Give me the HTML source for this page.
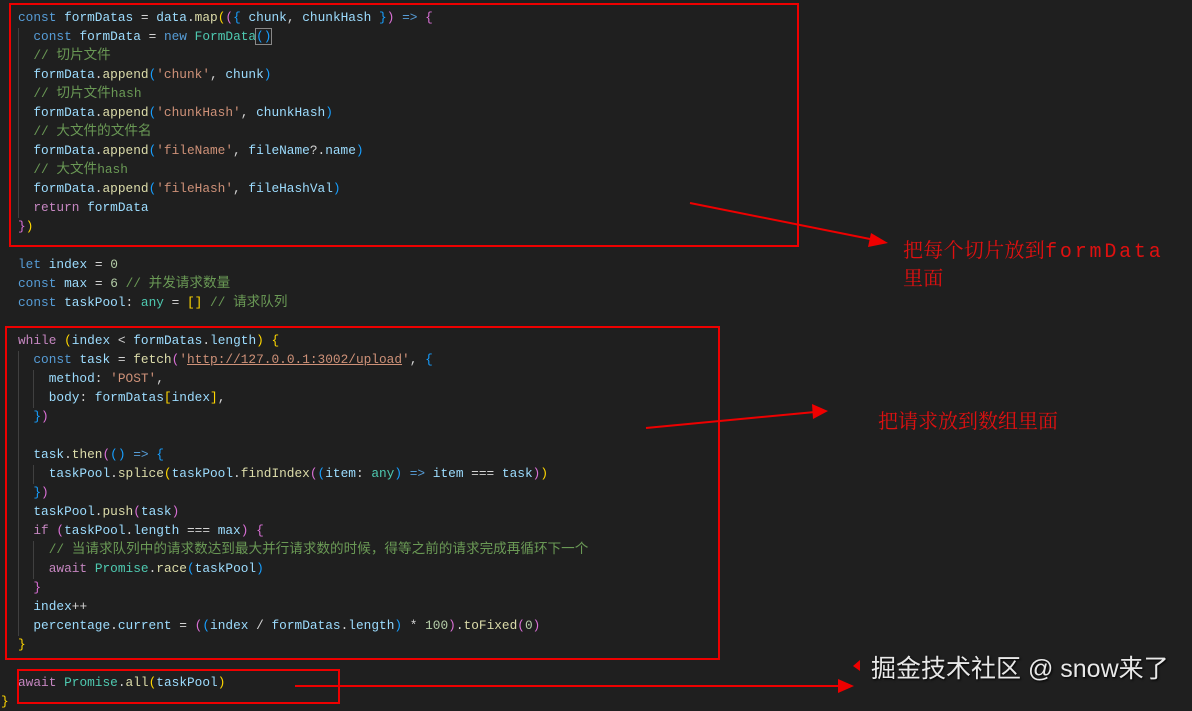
<!DOCTYPE html>
<html><head><meta charset="utf-8"><style>
body{margin:0;width:1192px;height:706px;background:#1f1f1f;overflow:hidden;position:relative;font-family:"Liberation Mono","Noto Sans CJK SC",monospace;}
.code{position:absolute;left:18px;top:8px;font-size:12.8px;line-height:19px;color:#d4d4d4;white-space:pre;}
.k{color:#569cd6}.v{color:#9cdcfe}.f{color:#dcdcaa}.s{color:#ce9178}.c{color:#6a9955}.p{color:#c586c0}.t{color:#4ec9b0}.n{color:#b5cea8}
.z{font-size:13.6px;line-height:19px;display:inline-block;height:19px;vertical-align:top;position:relative;top:1px}
.y{color:#ffd700}.m{color:#da70d6}.b{color:#179fff}
.g{position:absolute;width:1px;background:#404040}
.box{position:absolute;border:2px solid #e00;}
.ann{position:absolute;color:#e01010;font-family:"Liberation Mono","Noto Serif CJK SC",serif;font-size:20px;line-height:28px;}
</style></head><body>
<div class="g" style="left:18px;top:28px;height:190px"></div>
<div class="g" style="left:18px;top:351px;height:285px"></div>
<div class="g" style="left:33px;top:370px;height:38px"></div>
<div class="g" style="left:33px;top:465px;height:19px"></div>
<div class="g" style="left:33px;top:541px;height:38px"></div>
<div class="code"><span class="k">const</span> <span class="v">formDatas</span> = <span class="v">data</span>.<span class="f">map</span><span class="y">(</span><span class="m">(</span><span class="b">{</span> <span class="v">chunk</span>, <span class="v">chunkHash</span> <span class="b">}</span><span class="m">)</span> <span class="k">=&gt;</span> <span class="m">{</span>
  <span class="k">const</span> <span class="v">formData</span> = <span class="k">new</span> <span class="t">FormData</span><span class="b" style="outline:1px solid #888">()</span>
  <span class="c">// <span class="z">切片文件</span></span>
  <span class="v">formData</span>.<span class="f">append</span><span class="b">(</span><span class="s">'chunk'</span>, <span class="v">chunk</span><span class="b">)</span>
  <span class="c">// <span class="z">切片文件</span>hash</span>
  <span class="v">formData</span>.<span class="f">append</span><span class="b">(</span><span class="s">'chunkHash'</span>, <span class="v">chunkHash</span><span class="b">)</span>
  <span class="c">// <span class="z">大文件的文件名</span></span>
  <span class="v">formData</span>.<span class="f">append</span><span class="b">(</span><span class="s">'fileName'</span>, <span class="v">fileName</span>?.<span class="v">name</span><span class="b">)</span>
  <span class="c">// <span class="z">大文件</span>hash</span>
  <span class="v">formData</span>.<span class="f">append</span><span class="b">(</span><span class="s">'fileHash'</span>, <span class="v">fileHashVal</span><span class="b">)</span>
  <span class="p">return</span> <span class="v">formData</span>
<span class="m">}</span><span class="y">)</span>

<span class="k">let</span> <span class="v">index</span> = <span class="n">0</span>
<span class="k">const</span> <span class="v">max</span> = <span class="n">6</span> <span class="c">// <span class="z">并发请求数量</span></span>
<span class="k">const</span> <span class="v">taskPool</span>: <span class="t">any</span> = <span class="y">[]</span> <span class="c">// <span class="z">请求队列</span></span>

<span class="p">while</span> <span class="y">(</span><span class="v">index</span> &lt; <span class="v">formDatas</span>.<span class="v">length</span><span class="y">)</span> <span class="y">{</span>
  <span class="k">const</span> <span class="v">task</span> = <span class="f">fetch</span><span class="m">(</span><span class="s">'<u>http://127.0.0.1:3002/upload</u>'</span>, <span class="b">{</span>
    <span class="v">method</span>: <span class="s">'POST'</span>,
    <span class="v">body</span>: <span class="v">formDatas</span><span class="y">[</span><span class="v">index</span><span class="y">]</span>,
  <span class="b">}</span><span class="m">)</span>

  <span class="v">task</span>.<span class="f">then</span><span class="m">(</span><span class="b">()</span> <span class="k">=&gt;</span> <span class="b">{</span>
    <span class="v">taskPool</span>.<span class="f">splice</span><span class="y">(</span><span class="v">taskPool</span>.<span class="f">findIndex</span><span class="m">(</span><span class="b">(</span><span class="v">item</span>: <span class="t">any</span><span class="b">)</span> <span class="k">=&gt;</span> <span class="v">item</span> === <span class="v">task</span><span class="m">)</span><span class="y">)</span>
  <span class="b">}</span><span class="m">)</span>
  <span class="v">taskPool</span>.<span class="f">push</span><span class="m">(</span><span class="v">task</span><span class="m">)</span>
  <span class="p">if</span> <span class="m">(</span><span class="v">taskPool</span>.<span class="v">length</span> === <span class="v">max</span><span class="m">)</span> <span class="m">{</span>
    <span class="c">// <span class="z">当请求队列中的请求数达到最大并行请求数的时候，得等之前的请求完成再循环下一个</span></span>
    <span class="p">await</span> <span class="t">Promise</span>.<span class="f">race</span><span class="b">(</span><span class="v">taskPool</span><span class="b">)</span>
  <span class="m">}</span>
  <span class="v">index</span>++
  <span class="v">percentage</span>.<span class="v">current</span> = <span class="m">(</span><span class="b">(</span><span class="v">index</span> / <span class="v">formDatas</span>.<span class="v">length</span><span class="b">)</span> * <span class="n">100</span><span class="m">)</span>.<span class="f">toFixed</span><span class="m">(</span><span class="n">0</span><span class="m">)</span>
<span class="y">}</span>

<span class="p">await</span> <span class="t">Promise</span>.<span class="f">all</span><span class="y">(</span><span class="v">taskPool</span><span class="y">)</span></div>
<div style="position:absolute;left:1px;top:692px;font-family:'Liberation Mono',monospace;font-size:12.8px;line-height:19px;color:#ffd700">}</div>
<div class="box" style="left:9px;top:3px;width:786px;height:240px"></div>
<div class="box" style="left:5px;top:326px;width:711px;height:330px"></div>
<div class="box" style="left:17px;top:669px;width:319px;height:31px"></div>
<svg width="1192" height="706" style="position:absolute;left:0;top:0">
<g stroke="#e00" stroke-width="2" fill="#e00">
<line x1="690" y1="203" x2="875" y2="240"/><polygon points="888,243 871,233 868,247" stroke="none"/>
<line x1="646" y1="428" x2="815" y2="412"/><polygon points="828,411 812,404 813,419" stroke="none"/>
<line x1="295" y1="686" x2="840" y2="686"/><polygon points="854,686 838,679 838,693" stroke="none"/>
<polygon points="853,666 860,660 860,671" stroke="none"/>
</g></svg>
<div class="ann" style="left:903px;top:239px;letter-spacing:0.3px">把每个切片放到<span style="letter-spacing:2.8px">formData</span><br>里面</div>
<div class="ann" style="left:878px;top:410px">把请求放到数组里面</div>
<div style="position:absolute;left:871px;top:653px;color:#e8e8e8;font-family:'Liberation Sans','Noto Sans CJK SC',sans-serif;font-size:25px;line-height:32px;text-shadow:1px 1px 2px #000">掘金技术社区 @ snow来了</div>
</body></html>
